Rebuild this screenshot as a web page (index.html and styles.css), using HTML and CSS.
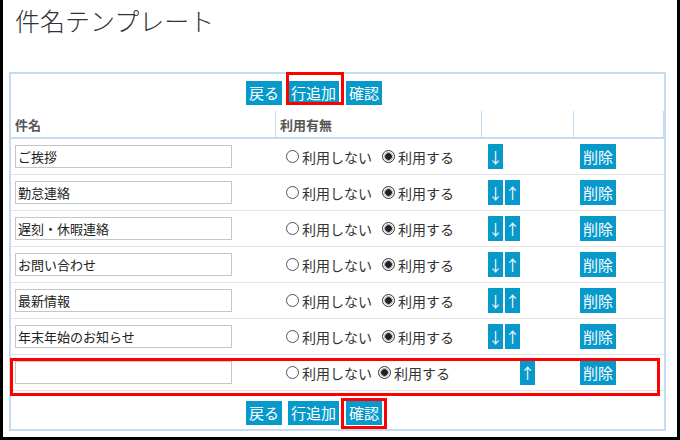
FILE: index.html
```html
<!DOCTYPE html>
<html lang="ja">
<head>
<meta charset="utf-8">
<link rel="stylesheet" href="styles.css">
</head>
<body>
<div class="frame">
  <h1 class="title">件名テンプレート</h1>
  <div class="panel">
    <div class="actions">
      <button class="btn gap-a">戻る</button>
      <button class="btn gap-b mark mark-top">行追加</button>
      <button class="btn">確認</button>
    </div>
    <div class="grid">
      <div class="row head">
        <div class="cell c1">件名</div>
        <div class="cell c2">利用有無</div>
        <div class="cell c3"></div>
        <div class="cell c4"></div>
      </div>
      <div class="row">
        <div class="cell c1"><input class="subject" type="text" value="ご挨拶"></div>
        <div class="cell c2"><label class="opt"><input type="radio" name="r1">利用しない</label><label class="opt"><input type="radio" name="r1" checked>利用する</label></div>
        <div class="cell c3"><button class="btn arrow">↓</button></div>
        <div class="cell c4"><button class="btn">削除</button></div>
      </div>
      <div class="row">
        <div class="cell c1"><input class="subject" type="text" value="勤怠連絡"></div>
        <div class="cell c2"><label class="opt"><input type="radio" name="r2">利用しない</label><label class="opt"><input type="radio" name="r2" checked>利用する</label></div>
        <div class="cell c3"><button class="btn arrow">↓</button><button class="btn arrow">↑</button></div>
        <div class="cell c4"><button class="btn">削除</button></div>
      </div>
      <div class="row">
        <div class="cell c1"><input class="subject" type="text" value="遅刻・休暇連絡"></div>
        <div class="cell c2"><label class="opt"><input type="radio" name="r3">利用しない</label><label class="opt"><input type="radio" name="r3" checked>利用する</label></div>
        <div class="cell c3"><button class="btn arrow">↓</button><button class="btn arrow">↑</button></div>
        <div class="cell c4"><button class="btn">削除</button></div>
      </div>
      <div class="row">
        <div class="cell c1"><input class="subject" type="text" value="お問い合わせ"></div>
        <div class="cell c2"><label class="opt"><input type="radio" name="r4">利用しない</label><label class="opt"><input type="radio" name="r4" checked>利用する</label></div>
        <div class="cell c3"><button class="btn arrow">↓</button><button class="btn arrow">↑</button></div>
        <div class="cell c4"><button class="btn">削除</button></div>
      </div>
      <div class="row">
        <div class="cell c1"><input class="subject" type="text" value="最新情報"></div>
        <div class="cell c2"><label class="opt"><input type="radio" name="r5">利用しない</label><label class="opt"><input type="radio" name="r5" checked>利用する</label></div>
        <div class="cell c3"><button class="btn arrow">↓</button><button class="btn arrow">↑</button></div>
        <div class="cell c4"><button class="btn">削除</button></div>
      </div>
      <div class="row">
        <div class="cell c1"><input class="subject" type="text" value="年末年始のお知らせ"></div>
        <div class="cell c2"><label class="opt"><input type="radio" name="r6">利用しない</label><label class="opt"><input type="radio" name="r6" checked>利用する</label></div>
        <div class="cell c3"><button class="btn arrow">↓</button><button class="btn arrow">↑</button></div>
        <div class="cell c4"><button class="btn">削除</button></div>
      </div>
      <div class="row new-row">
        <div class="cell c1"><input class="subject" type="text" value=""></div>
        <div class="cell c2"><label class="opt tight"><input type="radio" name="r7">利用しない</label><label class="opt"><input type="radio" name="r7" checked>利用する</label></div>
        <div class="cell c3"><button class="btn arrow shift">↑</button></div>
        <div class="cell c4"><button class="btn">削除</button></div>
      </div>
    </div>
    <div class="actions bottom">
      <button class="btn gap-a">戻る</button>
      <button class="btn gap-b">行追加</button>
      <button class="btn mark mark-bottom">確認</button>
    </div>
  </div>
</div>
</body>
</html>
```
FILE: styles.css
```css
* { box-sizing: border-box; }
html, body { margin: 0; padding: 0; background: #fff; }
body {
  font-family: "Noto Sans CJK JP", "Noto Sans", sans-serif;
  color: #333;
}
.frame {
  width: 680px;
  height: 440px;
  border-left: 3px solid #000;
  border-right: 3px solid #000;
  border-bottom: 3px solid #000;
  overflow: hidden;
}
.title {
  margin: 0 0 34px 0;
  padding: 3px 0 0 12px;
  font-size: 25px;
  line-height: 35px;
  font-weight: 300;
  color: #333;
}
.panel {
  margin-left: 6px;
  width: 657px;
  height: 359px;
  border: 2px solid #c4dcf2;
  padding-top: 7px;
}
.actions {
  display: flex;
  padding-left: 235px;
  height: 24px;
}
.actions.bottom { margin-top: 10px; }
.btn {
  position: relative;
  display: inline-flex;
  align-items: center;
  justify-content: center;
  height: 24px;
  padding: 0 3px;
  margin: 0;
  border: 0;
  background: #0899cb;
  color: #fff;
  font-family: "Noto Sans CJK JP", sans-serif;
  font-size: 15px;
  line-height: 24px;
}
.gap-a { margin-right: 6px; }
.gap-b { margin-right: 7px; }
.mark::after {
  content: "";
  position: absolute;
  border: 3px solid #f00;
}
.mark-top::after { top: -9px; bottom: 0; left: -2px; right: -5px; }
.mark-bottom::after { top: -3px; bottom: -4px; left: -5px; right: -5px; }
.grid { margin-top: 6px; }
.row {
  display: grid;
  grid-template-columns: 264px 206px 92px 91px;
  height: 36px;
  border-bottom: 1px solid #e4e4e4;
}
.row.head {
  height: 28px;
  border-bottom: 2px solid #c4dcf2;
}
.cell {
  display: flex;
  align-items: center;
}
.head .cell {
  font-size: 13px;
  font-weight: bold;
  color: #555;
}
.head .c1 { padding-left: 4px; }
.head .c2 { padding-left: 4px; border-left: 1px solid #c4dcf2; }
.head .c3 { border-left: 1px solid #c4dcf2; }
.head .c4 { border-left: 1px solid #c4dcf2; border-right: 1px solid #c4dcf2; }
.c1 { padding-left: 4px; }
.c2 { padding-left: 11px; }
.c3 { padding-left: 7px; gap: 2px; }
.c4 { padding-left: 7px; }
.subject {
  width: 217px;
  height: 23px;
  border: 1px solid #c6c6c6;
  padding: 0 2px;
  margin: 0;
  font-family: "Noto Sans CJK JP", sans-serif;
  font-size: 13px;
  color: #222;
  background: #fff;
}
.opt {
  display: inline-flex;
  align-items: center;
  font-size: 14px;
  color: #333;
  margin-right: 10px;
}
.opt.tight { margin-right: 6px; }
.opt input {
  appearance: none;
  -webkit-appearance: none;
  width: 13px;
  height: 13px;
  margin: 0 3px 0 0;
  border: 1px solid #555;
  border-radius: 50%;
  background: #fff;
}
.opt input:checked {
  border-color: #333;
  background: radial-gradient(circle, #222 0, #222 3px, #bbb 3.6px, #bbb 4.2px, #fff 4.8px);
}
.arrow {
  width: 15px;
  height: 25px;
  padding: 0;
  font-size: 15px;
  overflow: hidden;
}
.c4 .btn { height: 25px; }
.arrow.shift { margin-left: 32px; }
.new-row { position: relative; }
.new-row::after {
  content: "";
  position: absolute;
  top: 3px;
  bottom: -6px;
  left: -1px;
  right: 4px;
  border: 3px solid #f00;
  pointer-events: none;
}
```
